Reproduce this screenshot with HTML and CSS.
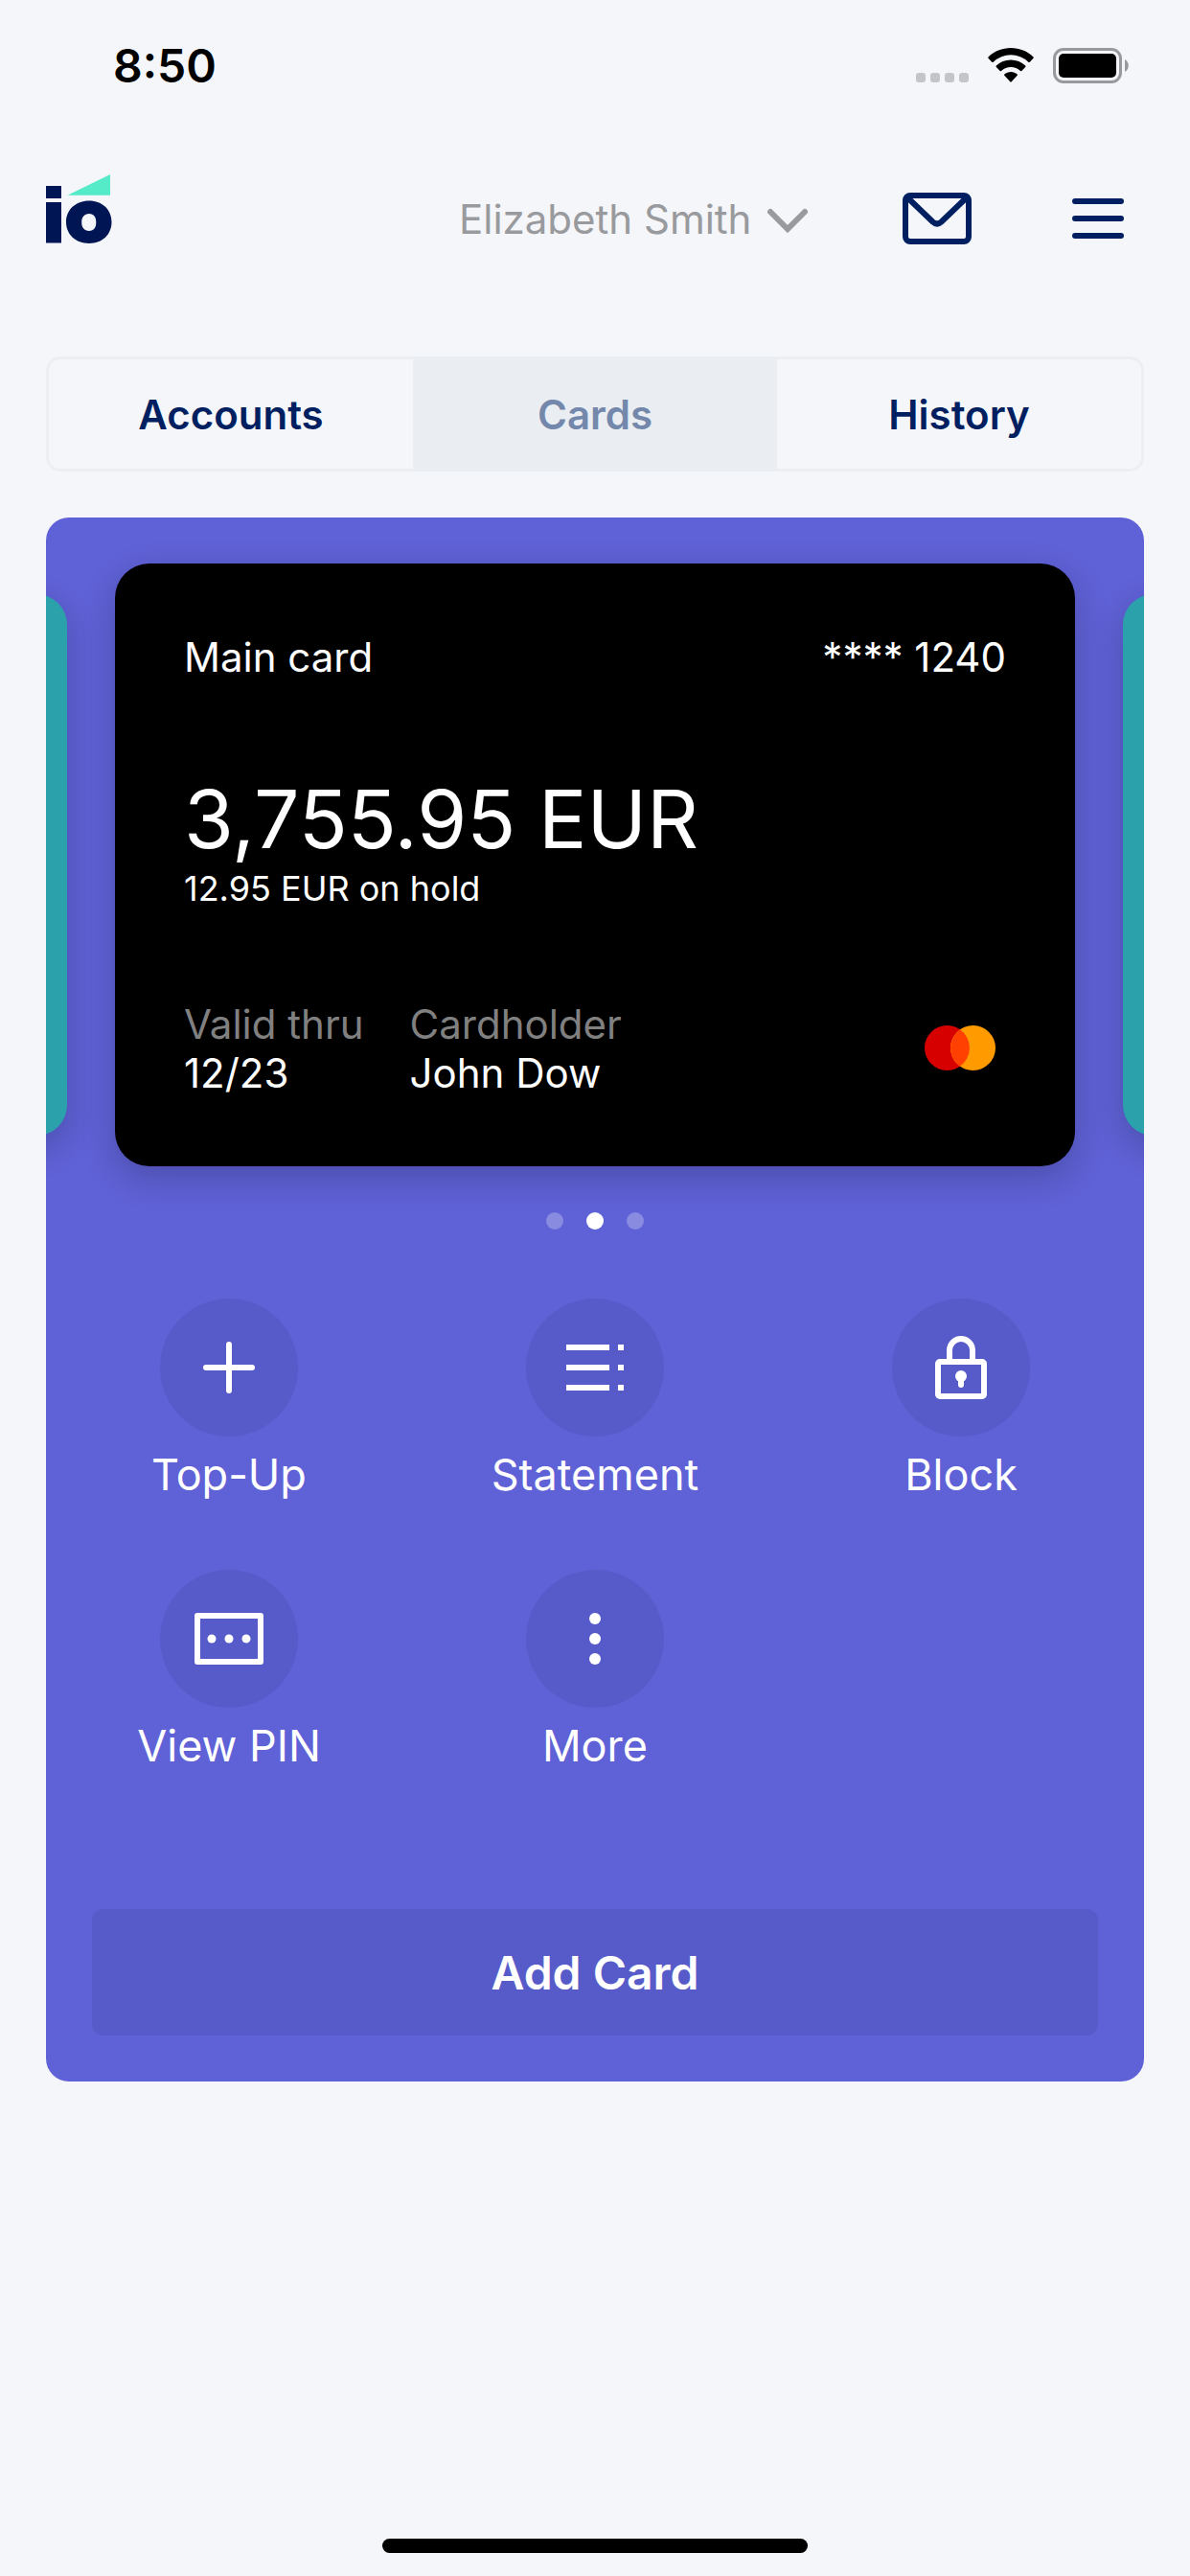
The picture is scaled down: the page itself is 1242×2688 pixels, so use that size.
FILE: index.html
```html
<!DOCTYPE html>
<html lang="en">
<head>
  <meta charset="utf-8">
  <meta name="viewport" content="width=device-width, initial-scale=1">
  <title>Cards</title>
  <link rel="stylesheet" href="styles.css">
</head>
<body>
  <div class="status">
    <time class="status-time">8:50</time>
    <div class="status-icons">
      <svg width="55" height="36" viewBox="0 0 55 36" fill="#c4c5c9" aria-hidden="true">
        <rect x="0" y="26" width="10" height="10" rx="3"/>
        <rect x="15" y="26" width="10" height="10" rx="3"/>
        <rect x="30" y="26" width="10" height="10" rx="3"/>
        <rect x="45" y="26" width="10" height="10" rx="3"/>
      </svg>
      <svg width="48" height="36" viewBox="0 0 48 36" aria-hidden="true">
        <path d="M24 0C33 0 41.500 3.500 47.500 9.500Q48 10.200 47.500 10.800L43.800 14.700Q43 15.300 42.300 14.700A26.500 26.500 0 0 0 5.700 14.700Q5 15.300 4.200 14.700L.5 10.800Q0 10.200 .5 9.500C6.500 3.500 15 0 24 0Z"/>
        <path d="M24 12.500C29.800 12.500 35.200 14.700 39.200 18.500Q39.800 19.200 39.200 19.900L35.300 23.900Q34.700 24.400 34 23.900A14.800 14.800 0 0 0 14 23.900Q13.300 24.400 12.700 23.900L8.800 19.900Q8.200 19.200 8.800 18.500C12.800 14.700 18.200 12.500 24 12.500Z"/>
        <path d="M24 25C26.500 25 28.900 25.900 30.700 27.400Q31.300 28 30.700 28.700L24.700 35.300Q24 36 23.300 35.300L17.300 28.700Q16.700 28 17.300 27.400C19.100 25.900 21.500 25 24 25Z"/>
      </svg>
      <svg width="79" height="37" viewBox="0 0 79 37" aria-hidden="true">
        <rect x="1.500" y="1.500" width="69" height="34" rx="9.500" fill="none" stroke="#98999c" stroke-width="3"/>
        <rect x="6" y="6" width="60" height="25" rx="5"/>
        <path d="M75 12a7.500 7.500 0 0 1 0 13z" fill="#98999c"/>
      </svg>
    </div>
  </div>

  <header class="header">
    <a class="logo" href="#" aria-label="io">
      <svg width="69" height="92" viewBox="0 0 69 92" fill="#001654" aria-hidden="true">
        <rect x="0" y="12" width="16" height="13"/>
        <rect x="0" y="29" width="16" height="42.500"/>
        <path fill-rule="evenodd" d="M45 27.600C59 27.600 68.500 37 68.500 49.800S59 72 45 72S21 62.600 21 49.800S31 27.600 45 27.600ZM45 41C40 41 37.200 44.500 37.200 50S40 59 45 59S52.300 55.500 52.300 50S50 41 45 41Z"/>
        <path d="M22.500 21.700L67 0V21.700Z" fill="#55ebc9"/>
      </svg>
    </a>
    <div class="profile">
      <select class="profile-select" aria-label="Profile">
        <option>Elizabeth Smith</option>
      </select>
      <svg class="profile-arrow" width="48" height="36" viewBox="0 0 48 36" fill="none" stroke="#999a9d" stroke-width="6" stroke-linecap="round" aria-hidden="true">
        <path d="M6 11L24 29L42 11"/>
      </svg>
    </div>
    <div class="tools">
      <button class="tool" aria-label="Messages">
        <svg width="72" height="54" viewBox="0 0 72 54" fill="none" stroke="#001f60" stroke-width="6" aria-hidden="true">
          <rect x="3" y="3" width="66" height="48" rx="5"/>
          <path d="M5 5L31.500 30.500Q36 34.500 40.500 30.500L67 5"/>
        </svg>
      </button>
      <button class="tool" aria-label="Menu">
        <svg width="54" height="42" viewBox="0 0 54 42" stroke="#001f60" stroke-width="6" stroke-linecap="round" aria-hidden="true">
          <path d="M3 3H51M3 21H51M3 39H51"/>
        </svg>
      </button>
    </div>
  </header>

  <main class="main">
    <div class="tabs" role="tablist">
      <button class="tab" role="tab" aria-selected="false">Accounts</button>
      <button class="tab tab-active" role="tab" aria-selected="true">Cards</button>
      <button class="tab" role="tab" aria-selected="false">History</button>
    </div>

    <section class="panel">
      <div class="carousel">
        <div class="card card-side"></div>
        <article class="card card-main">
          <div class="card-row">
            <span>Main card</span>
            <span>**** 1240</span>
          </div>
          <div>
            <div class="balance">3,755.95 EUR</div>
            <div class="hold">12.95 EUR on hold</div>
          </div>
          <div class="card-row">
            <dl class="details">
              <div><dt>Valid thru</dt><dd>12/23</dd></div>
              <div><dt>Cardholder</dt><dd>John Dow</dd></div>
            </dl>
            <svg width="96" height="48" viewBox="0 0 96 48" role="img" aria-label="Mastercard">
              <circle cx="34.500" cy="23.500" r="23.500" fill="#d70000"/>
              <circle cx="61.500" cy="23.500" r="23.500" fill="#ff9a00"/>
              <path d="M48 4.300A23.500 23.500 0 0 1 48 42.700A23.500 23.500 0 0 1 48 4.300Z" fill="#ff4000"/>
            </svg>
          </div>
        </article>
        <div class="card card-side"></div>
      </div>

      <div class="dots">
        <span class="dot"></span>
        <span class="dot dot-active"></span>
        <span class="dot"></span>
      </div>

      <div class="actions">
        <button class="action">
          <span class="action-icon">
            <svg width="72" height="72" viewBox="0 0 72 72" stroke="#fff" stroke-width="6" stroke-linecap="round" aria-hidden="true">
              <path d="M12 36H60M36 12V60"/>
            </svg>
          </span>
          Top-Up
        </button>
        <button class="action">
          <span class="action-icon">
            <svg width="72" height="72" viewBox="0 0 72 72" stroke="#fff" stroke-width="6" aria-hidden="true">
              <path d="M6 15H51M6 36H51M6 57H51M60 15H66M60 36H66M60 57H66"/>
            </svg>
          </span>
          Statement
        </button>
        <button class="action">
          <span class="action-icon">
            <svg width="72" height="72" viewBox="0 0 72 72" fill="none" stroke="#fff" stroke-width="6" aria-hidden="true">
              <rect x="12" y="30" width="48" height="36" rx="2"/>
              <path d="M24 30V18A12 12 0 0 1 48 18V30"/>
              <circle cx="36" cy="45" r="6" fill="#fff" stroke="none"/>
              <path d="M36 45V54" stroke-linecap="round"/>
            </svg>
          </span>
          Block
        </button>
        <button class="action">
          <span class="action-icon">
            <svg width="72" height="72" viewBox="0 0 72 72" fill="#fff" aria-hidden="true">
              <rect x="3" y="12" width="66" height="48" fill="none" stroke="#fff" stroke-width="6" stroke-linejoin="round"/>
              <circle cx="18" cy="36" r="4.500"/>
              <circle cx="36" cy="36" r="4.500"/>
              <circle cx="54" cy="36" r="4.500"/>
            </svg>
          </span>
          View PIN
        </button>
        <button class="action">
          <span class="action-icon">
            <svg width="72" height="72" viewBox="0 0 72 72" fill="#fff" aria-hidden="true">
              <circle cx="36" cy="15" r="6"/>
              <circle cx="36" cy="36" r="6"/>
              <circle cx="36" cy="57" r="6"/>
            </svg>
          </span>
          More
        </button>
      </div>

      <button class="add-card">Add Card</button>
    </section>
  </main>

  <div class="home-bar"></div>
</body>
</html>
```

FILE: styles.css
```css
* {
  box-sizing: border-box;
}

body {
  margin: 0;
  min-height: 100vh;
  display: flex;
  flex-direction: column;
  background: #f5f6fa;
  color: #001f60;
  font-family: Inter, "Liberation Sans", sans-serif;
  font-size: 42px;
  line-height: 51px;
}

button,
select {
  margin: 0;
  padding: 0;
  border: 0;
  background: none;
  color: inherit;
  font: inherit;
  cursor: pointer;
}

svg {
  display: block;
  flex: none;
}

/* Status bar */
.status {
  display: flex;
  align-items: center;
  justify-content: space-between;
  height: 136px;
  padding: 0 64px 0 118px;
  color: #000;
}

.status-time {
  font-size: 48px;
  font-weight: 600;
}

.status-icons {
  display: flex;
  align-items: center;
  gap: 20px;
}

/* Header */
.header {
  display: flex;
  align-items: center;
  height: 184px;
  padding: 0 48px;
}

.profile {
  display: grid;
  align-items: center;
  margin: 0 84px 0 auto;
}

.profile-select {
  grid-area: 1 / 1;
  appearance: none;
  padding-right: 61px;
  color: #999a9d;
}

.profile-arrow {
  grid-area: 1 / 1;
  justify-self: end;
  pointer-events: none;
}

.tools {
  display: flex;
  gap: 72px;
}

.tool {
  display: flex;
  align-items: center;
  justify-content: center;
  width: 96px;
  height: 96px;
}

/* Tabs */
.main {
  display: flex;
  flex-direction: column;
  gap: 48px;
  padding: 52px 48px;
}

.tabs {
  display: grid;
  grid-template-columns: repeat(3, 1fr);
  height: 120px;
  border: 3px solid #ebeef2;
  border-radius: 15px;
}

.tab {
  font-weight: 600;
}

.tab-active {
  background: #eaeef3;
  color: #7388ab;
  box-shadow: 0 3px #eaeef3, 0 -3px #eaeef3;
}

/* Cards panel */
.panel {
  padding: 48px 0;
  border-radius: 24px;
  background: #5f61d6;
  color: #fff;
  overflow: hidden;
}

.carousel {
  display: flex;
  justify-content: center;
  gap: 50px;
}

.card {
  flex: none;
  border-radius: 36px;
  box-shadow: 0 12px 36px rgba(0, 0, 0, 0.2);
}

.card-main {
  display: flex;
  flex-direction: column;
  gap: 94px;
  width: calc(100% - 144px);
  padding: 72px;
  background: #000;
}

.card-side {
  width: 80%;
  margin: 32px 0;
  border-radius: 32px;
  background: #2ba2ab;
}

.card-row {
  display: flex;
  align-items: center;
  justify-content: space-between;
}

.balance {
  font-size: 84px;
  line-height: 100px;
}

.hold {
  font-size: 36px;
  line-height: 44px;
}

.details {
  display: flex;
  gap: 48px;
  margin: 0;
}

.details dt {
  color: #808080;
}

.details dd {
  margin: 0;
}

.dots {
  display: flex;
  justify-content: center;
  gap: 24px;
  margin: 48px 0 72px;
}

.dot {
  width: 18px;
  height: 18px;
  border-radius: 50%;
  background: #888be0;
}

.dot-active {
  background: #fff;
}

.actions {
  display: grid;
  grid-template-columns: repeat(3, 1fr);
  row-gap: 71px;
}

.action {
  display: flex;
  flex-direction: column;
  align-items: center;
  gap: 12px;
  font-size: 45px;
  line-height: 56px;
}

.action-icon {
  display: flex;
  align-items: center;
  justify-content: center;
  width: 144px;
  height: 144px;
  border-radius: 50%;
  background: #575bc9;
}

.add-card {
  display: block;
  width: calc(100% - 96px);
  height: 132px;
  margin: 142px 48px 0;
  border-radius: 12px;
  background: #575bc9;
  font-size: 48px;
  font-weight: 600;
}

/* Home indicator */
.home-bar {
  width: 444px;
  max-width: 60%;
  height: 15px;
  margin: auto auto 24px;
  border-radius: 8px;
  background: #000;
}
```
